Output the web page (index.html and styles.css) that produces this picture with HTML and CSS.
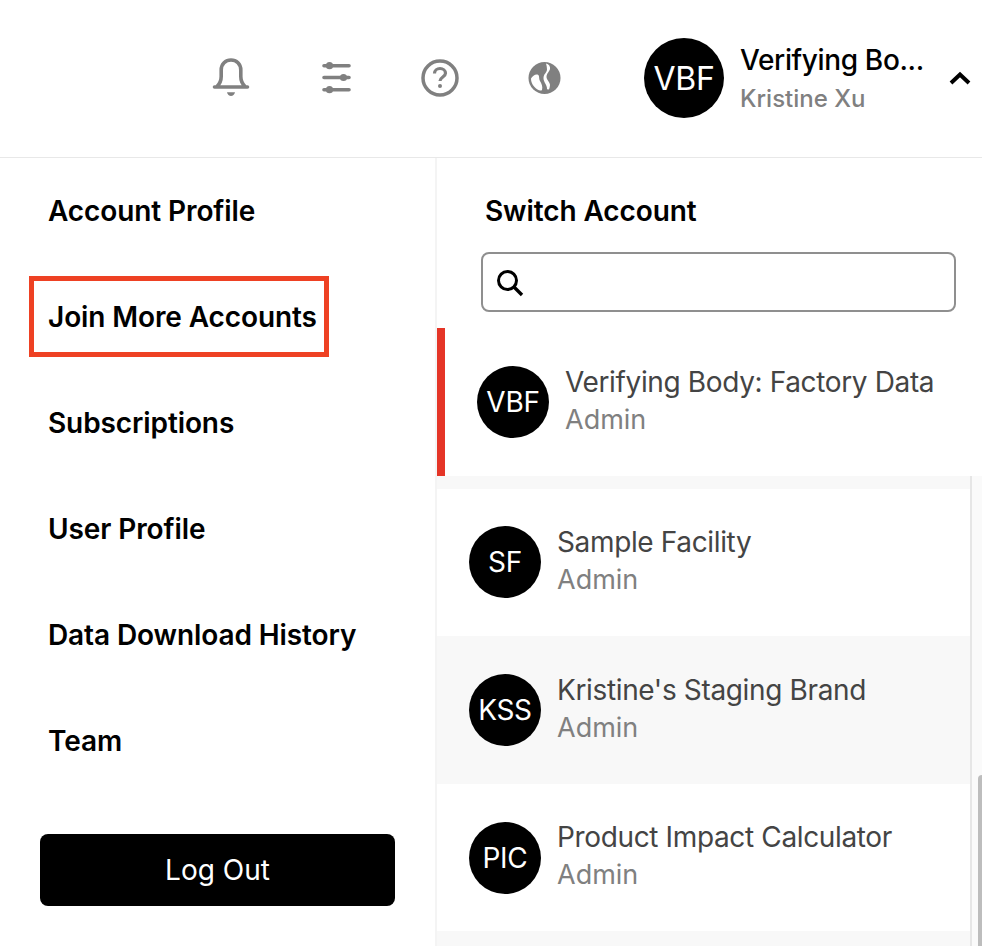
FILE: index.html
```html
<!DOCTYPE html>
<html lang="en">
<head>
    <meta charset="UTF-8">
    <meta name="viewport" content="width=device-width, initial-scale=1.0">
    <title>Account menu</title>
    <link rel="stylesheet" href="styles.css">
</head>
<body>

    <div class="header">
        <div class="header-icons">
            <svg class="icon" viewBox="0 0 40 40" width="40" height="40">
                <path d="M3.500 29h33M6 28.500c3-3 4.200-6 4.200-10V12C10.200 6 14.500 2 20 2s9.800 4 9.800 10v6.500c0 4 1.200 7 4.200 10" fill="none" stroke="#808080" stroke-width="3.600" stroke-linecap="round" stroke-linejoin="round"/>
                <path d="M16 34.200h8c-.4 2.400-2.200 3.800-4 3.800s-3.600-1.400-4-3.800z" fill="#808080"/>
            </svg>
            <svg class="icon" viewBox="0 0 40 40" width="40" height="40">
                <path d="M8 7.700h25M8 19.500h25M8 31.700h25" stroke="#808080" stroke-width="3.600" stroke-linecap="round"/>
                <circle cx="13.500" cy="7.700" r="3.600" fill="#808080"/>
                <circle cx="27.500" cy="19.500" r="3.600" fill="#808080"/>
                <circle cx="13.500" cy="31.700" r="3.600" fill="#808080"/>
            </svg>
            <svg class="icon" viewBox="0 0 40 40" width="40" height="40">
                <circle cx="20" cy="20" r="17" fill="none" stroke="#808080" stroke-width="3.500"/>
                <path d="M14.500 15.500c0-3 2.500-5 5.500-5s5.500 2 5.500 4.800c0 3.700-5.500 3.700-5.500 7.700" fill="none" stroke="#808080" stroke-width="3.200"/>
                <circle cx="20" cy="28" r="2" fill="#808080"/>
            </svg>
            <svg class="icon" viewBox="0 0 40 40" width="40" height="40">
                <circle cx="19.500" cy="20" r="16" fill="#808080"/>
                <path d="M6 20.500c1.500-2.500 4-4.500 6.500-4 2.500 1 1 4 2.500 6.500 1.500 2.500 3 5.500 2 9-1 1-3 .5-4.500-.5C8.500 29 6 25 6 20.500z" fill="#fff"/>
                <path d="M21 5.500c3 .8 4.500 3 4 5.500-.6 2.500-3.500 4.500-3.500 8 0 3 3.500 5 3.500 8 0 1.500-.5 3-1 4.500l-2-.2c.5-4-3.500-7-3.500-11 0-4.500 3.500-5.500 3.500-9 0-2-.5-4-1-5.800z" fill="#fff"/>
            </svg>
        </div>
        <div class="account">
            <div class="avatar avatar-large">VBF</div>
            <div class="account-text">
                <div class="account-name">Verifying Bo...</div>
                <div class="account-user">Kristine Xu</div>
            </div>
            <svg class="chevron" viewBox="0 0 24 16" width="24" height="16">
                <path d="M3 13l9-8.500 9 8.500" fill="none" stroke="#000" stroke-width="4"/>
            </svg>
        </div>
    </div>

    <div class="dropdown">
        <div class="menu">
            <div class="menu-item">Account Profile</div>
            <div class="menu-item marked">Join More Accounts</div>
            <div class="menu-item">Subscriptions</div>
            <div class="menu-item">User Profile</div>
            <div class="menu-item">Data Download History</div>
            <div class="menu-item">Team</div>
            <button class="logout">Log Out</button>
        </div>

        <div class="switch">
            <div class="switch-top">
                <h2>Switch Account</h2>
                <div class="search">
                    <svg viewBox="0 0 30 30" width="30" height="30">
                        <circle cx="12.500" cy="13.500" r="9" fill="none" stroke="#000" stroke-width="3"/>
                        <path d="M19 20l8 8" stroke="#000" stroke-width="3.400"/>
                    </svg>
                </div>
            </div>
            <div class="active-row">
                <div class="avatar">VBF</div>
                <div class="row-text">
                    <div class="row-name">Verifying Body: Factory Data</div>
                    <div class="row-role">Admin</div>
                </div>
            </div>
            <div class="account-list">
                <div class="row">
                    <div class="avatar">SF</div>
                    <div class="row-text">
                        <div class="row-name">Sample Facility</div>
                        <div class="row-role">Admin</div>
                    </div>
                </div>
                <div class="row row-grey">
                    <div class="avatar">KSS</div>
                    <div class="row-text">
                        <div class="row-name">Kristine's Staging Brand</div>
                        <div class="row-role">Admin</div>
                    </div>
                </div>
                <div class="row">
                    <div class="avatar">PIC</div>
                    <div class="row-text">
                        <div class="row-name">Product Impact Calculator</div>
                        <div class="row-role">Admin</div>
                    </div>
                </div>
            </div>
            <div class="scroll-track">
                <div class="scroll-thumb"></div>
            </div>
        </div>
    </div>

</body>
</html>
```

FILE: styles.css
```css
body {
    font-family: Inter, "Noto Sans", sans-serif;
    background-color: #fff;
    margin: 0;
    padding: 0;
    color: #000;
    height: 946px;
    overflow: hidden;
}
.header {
    height: 158px;
    box-sizing: border-box;
    border-bottom: 1px solid #e8e8e8;
    display: flex;
    align-items: center;
    padding-left: 211px;
    padding-bottom: 1px;
}
.header-icons {
    display: flex;
    gap: 64.500px;
}
.icon {
    display: block;
}
.account {
    display: flex;
    align-items: center;
    margin-left: 79.500px;
}
.avatar {
    width: 72px;
    height: 72px;
    flex-shrink: 0;
    border-radius: 50%;
    background-color: #000;
    color: #fff;
    font-size: 28px;
    letter-spacing: -0.3px;
    display: flex;
    align-items: center;
    justify-content: center;
}
.avatar-large {
    width: 80px;
    height: 80px;
    font-size: 32px;
}
.account-text {
    width: 186px;
    margin-left: 16px;
    padding-top: 2px;
}
.account-name {
    font-size: 28px;
    font-weight: 500;
    line-height: 40px;
    letter-spacing: -0.36px;
    white-space: nowrap;
}
.account-user {
    font-size: 24px;
    font-weight: 500;
    line-height: 38px;
    color: #808080;
}
.chevron {
    margin-left: 22px;
}
.dropdown {
    display: flex;
    height: 788px;
}
.menu {
    width: 437px;
    flex-shrink: 0;
    box-sizing: border-box;
    padding: 0 40px;
    border-right: 2px solid #f4f4f4;
}
.menu-item {
    height: 106px;
    line-height: 106px;
    padding-left: 8px;
    font-size: 28px;
    font-weight: 600;
    letter-spacing: -0.1px;
    position: relative;
}
/* red box drawn over the item */
.marked::after {
    content: "";
    position: absolute;
    left: -11px;
    top: 12px;
    width: 290px;
    height: 71px;
    border: 5px solid #ee4123;
}
.logout {
    display: block;
    width: 355px;
    height: 72px;
    margin-top: 40px;
    border: none;
    border-radius: 8px;
    background-color: #000;
    color: #fff;
    font-family: inherit;
    font-size: 28px;
}
.switch {
    flex: 1;
    position: relative;
    min-width: 0;
}
.switch-top {
    height: 170px;
    box-sizing: border-box;
    padding: 0 26px 0 44px;
}
.switch-top h2 {
    margin: 0;
    height: 94px;
    line-height: 106px;
    font-size: 28px;
    font-weight: 600;
    padding-left: 4px;
    letter-spacing: -0.1px;
}
.search {
    height: 60px;
    box-sizing: border-box;
    border: 2px solid #8f8f8f;
    border-radius: 8px;
    display: flex;
    align-items: center;
    padding-left: 12px;
}
.active-row {
    height: 148px;
    box-sizing: border-box;
    border-left: 8px solid #e53527;
    padding-left: 32px;
    display: flex;
    align-items: center;
    gap: 16px;
}
.account-list {
    width: 535px;
    height: 470px;
    padding-top: 13px;
    box-sizing: border-box;
    background-color: #f8f8f8;
    border-right: 2px solid #e6e6e6;
}
.row {
    height: 147px;
    box-sizing: border-box;
    padding-left: 32px;
    display: flex;
    align-items: center;
    gap: 16px;
    background-color: #fff;
}
.row:first-child {
    padding-bottom: 1px;
}
.row-grey {
    height: 148px;
    background-color: #f8f8f8;
}
.row-text {
    margin-bottom: 3px;
}
.row-name {
    font-size: 28px;
    line-height: 38px;
    letter-spacing: -0.36px;
    color: #444;
}
.row-role {
    font-size: 27px;
    line-height: 38px;
    color: #808080;
}
.scroll-track {
    position: absolute;
    right: 0;
    top: 318px;
    bottom: 0;
    width: 10px;
    background-color: #fafafa;
}
.scroll-thumb {
    position: absolute;
    right: 0;
    top: 299px;
    width: 4px;
    height: 200px;
    border-radius: 4px 0 0 4px;
    background-color: #bdbdbd;
}
```
